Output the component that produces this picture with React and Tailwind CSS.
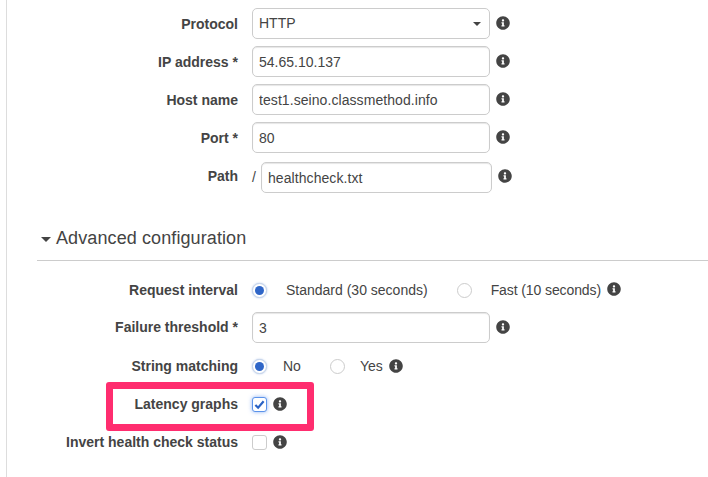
import { FaInfoCircle } from 'react-icons/fa';

function Info({ className = 'ml-[6px] -mt-[2px]' }) {
  return <FaInfoCircle className={`${className} w-[14px] h-[14px] shrink-0 text-[#444]`} />;
}

function Row({ label, className = '', labelClass = '', children }) {
  return (
    <div className={`flex items-center h-[31px] ${className}`}>
      <label className={`w-[231px] shrink-0 text-right font-bold text-[14px] text-[#444] whitespace-nowrap ${labelClass}`}>{label}</label>
      <div className="ml-[14px] flex items-center">{children}</div>
    </div>
  );
}

function TextBox({ value, width = 'w-[238px]', textClass = '' }) {
  return (
    <input
      readOnly
      value={value}
      className={`${width} h-[31px] rounded-[5px] border border-[#ccc] bg-white px-[6px] text-[14px] text-[#444] shadow-[inset_0_1px_1px_rgba(0,0,0,0.1)] outline-none ${textClass}`}
    />
  );
}

function Radio({ checked, className = '' }) {
  return (
    <span
      className={`flex items-center justify-center w-[15px] h-[15px] shrink-0 rounded-full border bg-white ${
        checked ? 'border-[#c5d3e8] shadow-[0_0_2px_rgba(47,102,200,0.4)]' : 'border-[#ccc]'
      } ${className}`}
    >
      {checked && <span className="w-[9px] h-[9px] rounded-full bg-[#2f66c8]" />}
    </span>
  );
}

export default function App() {
  return (
    <div className="relative w-[708px] h-[477px] overflow-hidden bg-white pl-[6px] font-['Liberation_Sans',Arial,sans-serif]">
      <div className="h-full border-l border-[#ddd] pt-[8px]">
        <div className="flex flex-col gap-[7px]">
          <Row label="Protocol" labelClass="mt-[2px]">
            <div className="relative flex items-center w-[238px] h-[31px] rounded-[5px] border border-[#ccc] bg-white px-[6px] text-[14px] text-[#444]">
              HTTP
              <span className="absolute right-[8px] top-[13px] border-x-[4px] border-t-[4px] border-x-transparent border-t-[#444]" />
            </div>
            <Info />
          </Row>
          <Row label="IP address *" labelClass="mt-[2px]">
            <TextBox value="54.65.10.137" />
            <Info />
          </Row>
          <Row label="Host name" labelClass="mt-[2px]">
            <TextBox value="test1.seino.classmethod.info" textClass="tracking-[0.07px]" />
            <Info />
          </Row>
          <Row label="Port *" labelClass="mt-[2px]">
            <TextBox value="80" />
            <Info />
          </Row>
          <Row label="Path" className="mt-[2px]" labelClass="-mt-[2px]">
            <span className="w-[9px] text-[14px] text-[#444]">/</span>
            <TextBox value="healthcheck.txt" width="w-[231px]" textClass="tracking-[0.07px]" />
            <Info className="ml-[6px] -mt-[4px]" />
          </Row>
        </div>

        <div className="ml-[30px] mt-[33px] pb-[10px] border-b border-[#ccc] h-[35px] flex items-center">
          <span className="ml-[4px] mt-[3px] border-x-[5px] border-t-[5px] border-x-transparent border-t-[#444]" />
          <h2 className="ml-[5px] text-[18px] tracking-[0.1px] text-[#444] font-normal whitespace-nowrap">Advanced configuration</h2>
        </div>

        <Row label="Request interval" className="mt-[14px]">
          <Radio checked />
          <span className="ml-[19px] text-[14px] text-[#444] whitespace-nowrap">Standard (30 seconds)</span>
          <Radio className="ml-[29px]" />
          <span className="ml-[19px] text-[14px] tracking-[-0.1px] text-[#444] whitespace-nowrap">Fast (10 seconds)</span>
          <Info className="ml-[6px] -mt-[4px]" />
        </Row>
        <Row label="Failure threshold *" className="mt-[6px]">
          <TextBox value="3" />
          <Info />
        </Row>
        <Row label="String matching" className="mt-[8px]">
          <Radio checked />
          <span className="ml-[16px] text-[14px] text-[#444]">No</span>
          <Radio className="ml-[29px]" />
          <span className="ml-[15px] text-[14px] text-[#444]">Yes</span>
          <Info />
        </Row>
        <Row label="Latency graphs" className="mt-[7px]">
          <span className="flex items-center justify-center w-[15px] h-[15px] rounded-[3px] border border-[#5b93ea] bg-white shadow-[0_0_4px_rgba(70,130,235,0.6)]">
            <svg viewBox="0 0 12 12" className="w-[11px] h-[11px]">
              <path d="M1.5 6.5 L4.5 9.5 L10.5 2.5" fill="none" stroke="#2a62c4" strokeWidth="2.4" />
            </svg>
          </span>
          <Info />
        </Row>
        <Row label="Invert health check status" className="mt-[7px]">
          <span className="w-[15px] h-[15px] rounded-[3px] border border-[#ccc] bg-white" />
          <Info />
        </Row>
      </div>

      {/* pink annotation over the latency row */}
      <div className="absolute left-[106px] top-[382px] w-[208px] h-[49px] rounded-[3px] border-[7px] border-[#ff2d6f]" />
    </div>
  );
}
